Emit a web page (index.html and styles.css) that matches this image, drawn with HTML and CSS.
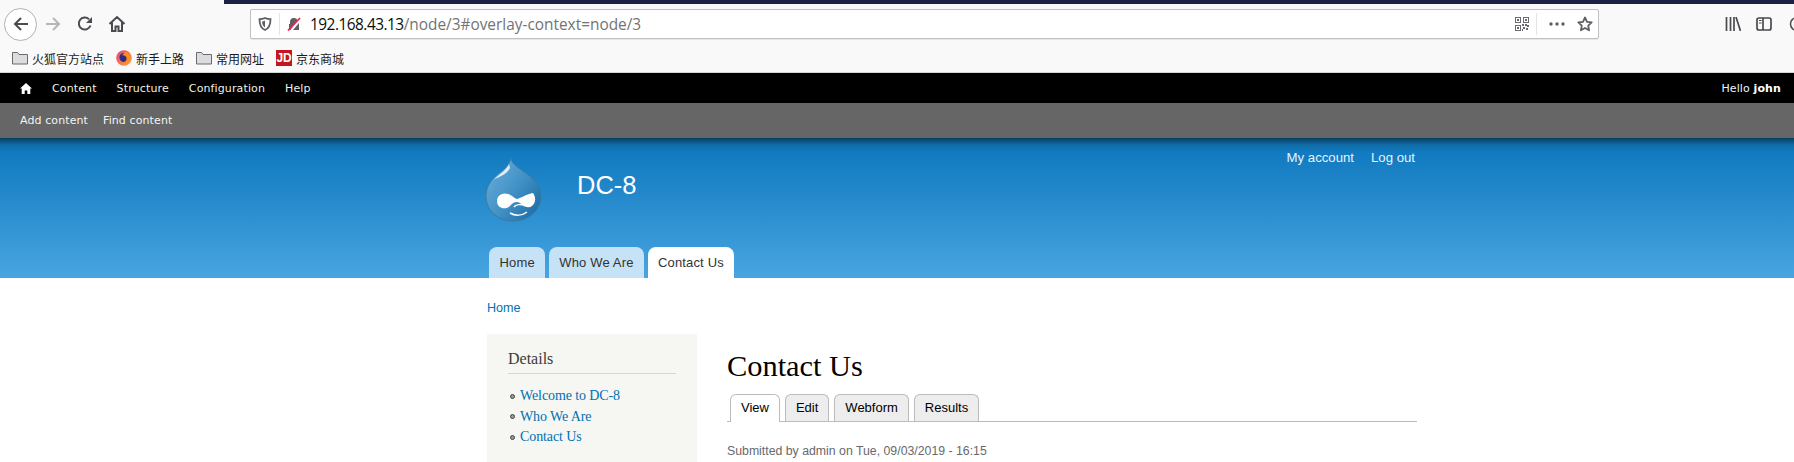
FILE: index.html
```html
<!DOCTYPE html>
<html lang="zh-CN">
<head>
    <meta charset="UTF-8">
    <title>Contact Us | DC-8</title>
    <link rel="stylesheet" href="styles.css">
</head>
<body>
    <!-- Browser chrome -->
    <div class="browser">
        <div class="title-strip"></div>
        <div class="nav-row">
            <button class="back-btn">
                <svg width="18" height="18" viewBox="0 0 18 18"><path d="M16 9H3M9 3L3 9l6 6" fill="none" stroke="#4a4a4f" stroke-width="2"/></svg>
            </button>
            <svg class="nav-icon forward" width="18" height="18" viewBox="0 0 18 18"><path d="M2 9h13M9 3l6 6-6 6" fill="none" stroke="#b5b5b7" stroke-width="2"/></svg>
            <svg class="nav-icon reload" width="16" height="16" viewBox="0 0 16 16"><path d="M13.500 9.500A6 6 0 1 1 12 3.200" fill="none" stroke="#4a4a4f" stroke-width="2"/><path d="M15 1v6H9z" fill="#4a4a4f"/></svg>
            <svg class="nav-icon home" width="18" height="18" viewBox="0 0 18 18"><path d="M1.500 9L9 2l7.500 7M4 7.500V16h3.500v-4.500h3V16H14V7.500" fill="none" stroke="#4a4a4f" stroke-width="2"/></svg>
            <div class="urlbar">
                <svg class="shield" width="14" height="14" viewBox="0 0 14 14"><path d="M7 1c2 1 3.500 1.200 5.500 1.200C12.500 8 10.500 11.500 7 13 3.500 11.500 1.500 8 1.500 2.200 3.500 2.200 5 2 7 1z" fill="none" stroke="#5f5f63" stroke-width="1.800"/><path d="M7 3.500v7c-1.800-1-2.800-3.200-3-6 1.200 0 2-.4 3-1z" fill="#5f5f63"/></svg>
                <span class="url-sep"></span>
                <svg class="lock" width="14" height="14" viewBox="0 0 14 14"><path d="M2 13V7h1V5a4 4 0 0 1 7.500-2L3.500 13z M12 6v7H6z" fill="#5f5f63"/><path d="M1 13.500L13 1" stroke="#f0254d" stroke-width="1.800"/></svg>
                <span class="url-text"><span class="host">192.168.43.13</span>/node/3#overlay-context=node/3</span>
                <svg class="qr" width="14" height="14" viewBox="0 0 14 14" fill="#6a6a70">
                    <path d="M0 0h6v6H0zM1 1v4h4V1zM8 0h6v6H8zM9 1v4h4V1zM0 8h6v6H0zM1 9v4h4V9z" fill-rule="evenodd"/>
                    <path d="M2 2h2v2H2zM10 2h2v2h-2zM2 10h2v2H2zM7 7h2v2H7zM10 7h2v2h-2zM8 10h2v2H8zM11 11h2v2h-2zM7 12h1v2H7zM12 8h2v2h-2z"/>
                </svg>
                <span class="url-sep right"></span>
                <svg class="dots" width="16" height="4" viewBox="0 0 16 4" fill="#5f5f63"><circle cx="2" cy="2" r="1.700"/><circle cx="8" cy="2" r="1.700"/><circle cx="14" cy="2" r="1.700"/></svg>
                <svg class="star" width="16" height="16" viewBox="0 0 16 16"><path d="M8 1.500l2 4.300 4.700.6-3.500 3.200.9 4.700L8 12l-4.100 2.300.9-4.700L1.300 6.400 6 5.800z" fill="none" stroke="#5f5f63" stroke-width="1.800" stroke-linejoin="round"/></svg>
            </div>
            <svg class="library" width="16" height="14" viewBox="0 0 16 14"><path d="M1.500 0v14M5.500 0v14M9 0v14M11 0l4.500 14" fill="none" stroke="#4a4a4f" stroke-width="1.700"/></svg>
            <svg class="side-panel" width="16" height="14" viewBox="0 0 16 14"><rect x="1" y="1" width="14" height="12" rx="2" fill="none" stroke="#4a4a4f" stroke-width="1.700"/><path d="M7 1v12" stroke="#4a4a4f" stroke-width="1.700"/><path d="M3 3.500h2.500M3 6h2.500" stroke="#4a4a4f"/></svg>
            <svg class="avatar" width="16" height="16" viewBox="0 0 16 16"><circle cx="8" cy="8" r="6.500" fill="none" stroke="#4a4a4f" stroke-width="1.500"/><circle cx="8" cy="6.500" r="2.500" fill="#4a4a4f"/></svg>
        </div>
        <div class="bookmarks">
            <a class="bookmark">
                <svg width="16" height="14" viewBox="0 0 16 14"><path d="M.5 12V1.500h5l1.500 2h8.500V13H.500z" fill="#dcdcde" stroke="#6a6a70"/></svg>
                火狐官方站点
            </a>
            <a class="bookmark">
                <svg width="16" height="16" viewBox="0 0 16 16">
                    <defs>
                        <linearGradient id="foxRing" x1="0" y1="0" x2="1" y2="1">
                            <stop offset="0" stop-color="#e0407a"/>
                            <stop offset="1" stop-color="#ffa92e"/>
                        </linearGradient>
                    </defs>
                    <circle cx="8" cy="8" r="7.800" fill="url(#foxRing)"/>
                    <circle cx="8" cy="7.500" r="4.500" fill="#2e2a86"/>
                    <path d="M10 1.500c3 1.500 4.500 4.500 3.500 7.500-1 3-4.500 5-8 3.500C8 12.500 11 11 10.500 8 10 6 8 5 6 5.500 7 3.500 9 3 10 1.500z" fill="#ff8a1e"/>
                </svg>
                新手上路
            </a>
            <a class="bookmark">
                <svg width="16" height="14" viewBox="0 0 16 14"><path d="M.5 12V1.500h5l1.500 2h8.500V13H.500z" fill="#dcdcde" stroke="#6a6a70"/></svg>
                常用网址
            </a>
            <a class="bookmark">
                <span class="jd-icon">JD</span>
                京东商城
            </a>
        </div>
    </div>

    <!-- Admin toolbar -->
    <div class="toolbar">
        <svg class="toolbar-home" width="12" height="11" viewBox="0 0 12 11"><path d="M6 0L0 5.500h1.700V11h3V7.500h2.600V11h3V5.500H12z" fill="#fff"/></svg>
        <a>Content</a>
        <a>Structure</a>
        <a>Configuration</a>
        <a>Help</a>
        <span class="hello">Hello <strong>john</strong></span>
    </div>
    <div class="shortcuts">
        <a>Add content</a>
        <a>Find content</a>
    </div>

    <!-- Site header -->
    <div class="site-header">
        <div class="column header-inner">
            <div class="branding">
                <svg class="logo" width="58" height="65" viewBox="0 0 58 65">
                    <defs>
                        <linearGradient id="dropFill" x1="0" y1="0" x2="1" y2="0.800">
                            <stop offset="0" stop-color="#6db2dd"/>
                            <stop offset="0.600" stop-color="#3f8fc4"/>
                            <stop offset="1" stop-color="#1f6ea6"/>
                        </linearGradient>
                    </defs>
                    <path d="M27 0c0 6 6 10 12 14C50 21 57 30 57 39 57 53 45 64 29 64 13 64 2 53 2 39 2 28 9 21 15 16 21 12 26 7 27 0z" fill="url(#dropFill)" stroke="#3a7aa5"/>
                    <path d="M25 7c-2 5-10 11-15 15 6-2 14-6 16-11z" fill="#dceffa"/>
                    <path d="M13 44c0-6 6-9 11-7 4 1 7 5 9 5 4-1 10-5 16-6 3 4 3 10-1 13-4 3-8 0-12-3-3-2-7-1-10 3-4 4-13 3-13-5z" fill="#fff"/>
                    <path d="M30 50c2-3 8-3 11-1M26 56c5 3 12 3 17-1" fill="none" stroke="#fff" stroke-width="1.500"/>
                </svg>
                <div class="site-name">DC-8</div>
                <div class="user-links">
                    <a>My account</a>
                    <a>Log out</a>
                </div>
            </div>
            <div class="main-menu">
                <a>Home</a>
                <a>Who We Are</a>
                <a class="active">Contact Us</a>
            </div>
        </div>
    </div>

    <!-- Page content -->
    <div class="column">
        <div class="breadcrumb"><a>Home</a></div>
        <div class="content-row">
            <div class="sidebar">
                <h2>Details</h2>
                <ul>
                    <li><a>Welcome to DC-8</a></li>
                    <li><a>Who We Are</a></li>
                    <li><a>Contact Us</a></li>
                </ul>
            </div>
            <div class="main">
                <h1>Contact Us</h1>
                <div class="tabs">
                    <a class="active">View</a>
                    <a>Edit</a>
                    <a>Webform</a>
                    <a>Results</a>
                </div>
                <p class="submitted">Submitted by admin on Tue, 09/03/2019 - 16:15</p>
            </div>
        </div>
    </div>
</body>
</html>
```

FILE: styles.css
```css
html, body {
    margin: 0;
    padding: 0;
    height: 462px;
    overflow: hidden;
    background-color: #fff;
    font-family: "Liberation Sans", Arial, sans-serif;
}
a {
    text-decoration: none;
}

/* browser chrome */
.browser {
    height: 72px;
    background-color: #f9f9fa;
    border-bottom: 1px solid #d4d4d4;
}
.title-strip {
    height: 4px;
    margin-left: 224px;
    background-color: #1c2042;
}
.nav-row {
    display: flex;
    align-items: center;
    height: 40px;
    padding-left: 4px;
    overflow: hidden;
}
.nav-row svg {
    flex-shrink: 0;
}
.back-btn {
    flex-shrink: 0;
    width: 33px;
    height: 33px;
    padding: 0;
    border: 1px solid #b1b1b3;
    border-radius: 50%;
    background-color: #fff;
    display: flex;
    align-items: center;
    justify-content: center;
}
.nav-icon.forward { margin-left: 7px; }
.nav-icon.reload { margin-left: 15px; }
.nav-icon.home { margin-left: 15px; }
.urlbar {
    flex-shrink: 0;
    display: flex;
    align-items: center;
    box-sizing: border-box;
    width: 1349px;
    height: 30px;
    margin-left: 124px;
    background-color: #fff;
    border: 1px solid #c0c0c2;
    border-radius: 2px;
    box-shadow: 0 1px 1px rgba(0, 0, 0, 0.08);
}
.shield { margin-left: 7px; }
.url-sep {
    width: 1px;
    height: 22px;
    margin-left: 7px;
    background-color: #e4e4e6;
}
.lock { margin-left: 7px; }
.url-text {
    margin-left: 9px;
    font-family: "Open Sans", sans-serif;
    font-size: 15.400px;
    color: #737373;
    white-space: nowrap;
}
.host {
    color: #0c0c0d;
    letter-spacing: -0.500px;
}
.qr { margin-left: auto; }
.url-sep.right { margin-left: 7px; }
.dots { margin-left: 12px; }
.star { margin-left: 12px; margin-right: 5px; }
.library { margin-left: 126px; }
.side-panel { margin-left: 15px; }
.avatar { margin-left: 17px; }

.bookmarks {
    display: flex;
    align-items: center;
    height: 28px;
    padding-left: 12px;
    gap: 12px;
}
.bookmark {
    display: flex;
    align-items: center;
    gap: 4px;
    font-family: "Noto Sans CJK SC", sans-serif;
    font-size: 12px;
    color: #1a1a1c;
}
.jd-icon {
    width: 16px;
    height: 16px;
    background-color: #c4161e;
    color: #fff;
    font-family: "Liberation Sans", sans-serif;
    font-size: 12px;
    font-weight: bold;
    line-height: 16px;
    text-align: center;
}

/* admin toolbar */
.toolbar {
    display: flex;
    align-items: center;
    height: 30px;
    padding-left: 20px;
    background-color: #000;
    font-family: "DejaVu Sans", Verdana, sans-serif;
    font-size: 11px;
    letter-spacing: 0.120px;
    color: #f0f0e6;
}
.toolbar-home { margin-right: 20px; }
.toolbar a { margin-right: 20px; }
.hello {
    margin-left: auto;
    margin-right: 13px;
    color: #eef4ff;
}
.hello strong { color: #fff; }
.shortcuts {
    display: flex;
    align-items: center;
    gap: 15px;
    box-sizing: border-box;
    height: 35px;
    padding-left: 20px;
    background-color: #666;
    font-family: "DejaVu Sans", Verdana, sans-serif;
    font-size: 11px;
    letter-spacing: 0.100px;
    color: #f4f4f4;
}

/* site header */
.site-header {
    height: 140px;
    background: linear-gradient(to bottom, #0a3c60 0, #0f6ca8 7px, #117ac0 14px, #48a5e1 100%);
}
.column {
    width: 930px;
    margin-left: 487px;
}
.header-inner {
    display: flex;
    flex-direction: column;
    height: 100%;
}
.branding {
    display: flex;
    align-items: flex-start;
}
.logo {
    margin-top: 19px;
    margin-left: -3px;
}
.site-name {
    margin-top: 31px;
    margin-left: 35px;
    font-size: 25.500px;
    line-height: 32px;
    color: #fff;
}
.user-links {
    display: flex;
    gap: 17px;
    margin-left: auto;
    margin-top: 12px;
    margin-right: 2px;
    font-size: 13.200px;
    color: #e6f2fa;
}
.main-menu {
    display: flex;
    gap: 3.500px;
    margin-top: auto;
    padding-left: 2px;
}
.main-menu a {
    height: 31px;
    padding: 0 10.500px;
    background-color: #c5e2f6;
    border-radius: 8px 8px 0 0;
    color: #333;
    font-size: 13px;
    letter-spacing: 0.150px;
    line-height: 32px;
}
.main-menu a.active { background-color: #fff; }

/* page content */
.breadcrumb {
    padding-top: 22px;
    font-size: 12.600px;
    line-height: 16px;
}
.breadcrumb a { color: #0071b3; }
.content-row {
    display: flex;
    margin-top: 18px;
}
.sidebar {
    box-sizing: border-box;
    width: 210px;
    height: 128px;
    padding: 15px 21px;
    background-color: #f6f6f2;
}
.sidebar h2 {
    margin: 0;
    padding-bottom: 5px;
    border-bottom: 1px solid #d6d6d6;
    font-family: "Liberation Serif", Georgia, serif;
    font-size: 16px;
    line-height: 19px;
    font-weight: normal;
    color: #3b3b3b;
}
.sidebar ul {
    margin: 12px 0 0;
    padding: 0;
    list-style-type: none;
    font-family: "Liberation Serif", Georgia, serif;
    font-size: 14px;
    line-height: 20.500px;
    letter-spacing: -0.100px;
}
.sidebar li {
    display: flex;
    align-items: center;
    gap: 5px;
    padding-left: 2px;
}
.sidebar li::before {
    content: "";
    box-sizing: border-box;
    width: 5px;
    height: 5px;
    border: 1.500px solid #444;
    border-radius: 50%;
    background-color: #999;
}
.sidebar a { color: #0071b3; }
.main {
    flex: 1;
    margin-left: 30px;
}
.main h1 {
    margin: 0;
    padding-top: 14px;
    font-family: "Liberation Serif", Georgia, serif;
    font-size: 30.400px;
    line-height: 36px;
    font-weight: normal;
    color: #000;
}
.tabs {
    display: flex;
    gap: 5px;
    height: 27px;
    margin-top: 10px;
    padding-left: 3px;
    border-bottom: 1px solid #bbb;
}
.tabs a {
    height: 26px;
    padding: 0 10px;
    background-color: #ededed;
    border: 1px solid #bbb;
    border-bottom: 0;
    border-radius: 6px 6px 0 0;
    font-size: 13px;
    line-height: 26px;
    color: #000;
}
.tabs a.active {
    height: 27px;
    background-color: #fff;
}
.submitted {
    margin: 22px 0 0;
    font-size: 12.300px;
    line-height: 15px;
    color: #68696b;
}
```
